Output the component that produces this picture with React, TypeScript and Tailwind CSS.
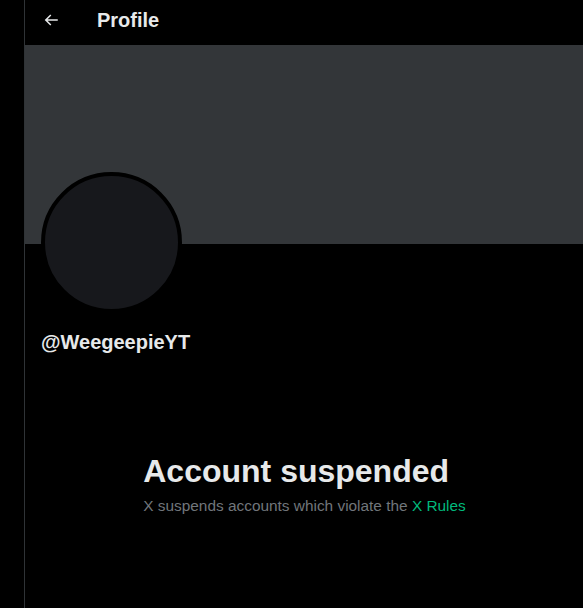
import React from 'react';

const App: React.FC = () => {
  return (
    <div className="flex min-h-[608px] w-full bg-black text-[#e7e9ea]" style={{ fontFamily: '"Liberation Sans", Arial, sans-serif' }}>
      <div className="w-6 shrink-0 bg-black" />
      <main className="flex-1 min-w-0 border-l border-[#2f3336]">
        <header className="flex h-[45px] items-center pb-[6px]">
          <button className="ml-[17px] flex h-[18px] w-[18px] items-center justify-center text-[#e7e9ea]">
            <svg viewBox="0 0 24 24" className="h-[18px] w-[18px]" fill="currentColor">
              <path d="M7.414 13l5.043 5.04-1.414 1.42L3.586 12l7.457-7.46 1.414 1.42L7.414 11H21v2H7.414z" />
            </svg>
          </button>
          <h2 className="ml-[37px] text-[20px] font-bold leading-6">Profile</h2>
        </header>

        <div className="h-[199px] bg-[#333639]" />

        <div className="px-4">
          <div className="-mt-[72px] h-[141px] w-[141px] rounded-full border-4 border-black bg-[#17181c]" />
          <div className="mt-[17px] text-[20px] font-bold leading-6">@WeegeepieYT</div>
        </div>

        <div className="mx-auto mt-[99px] w-fit pl-[1px]">
          <h1 className="text-[32px] font-bold leading-9">Account suspended</h1>
          <p className="mt-[7px] text-[15.4px] leading-5 text-[#71767b]">
            X suspends accounts which violate the <a className="text-[#00ba7c]">X Rules</a>
          </p>
        </div>
      </main>
    </div>
  );
};

export default App;
